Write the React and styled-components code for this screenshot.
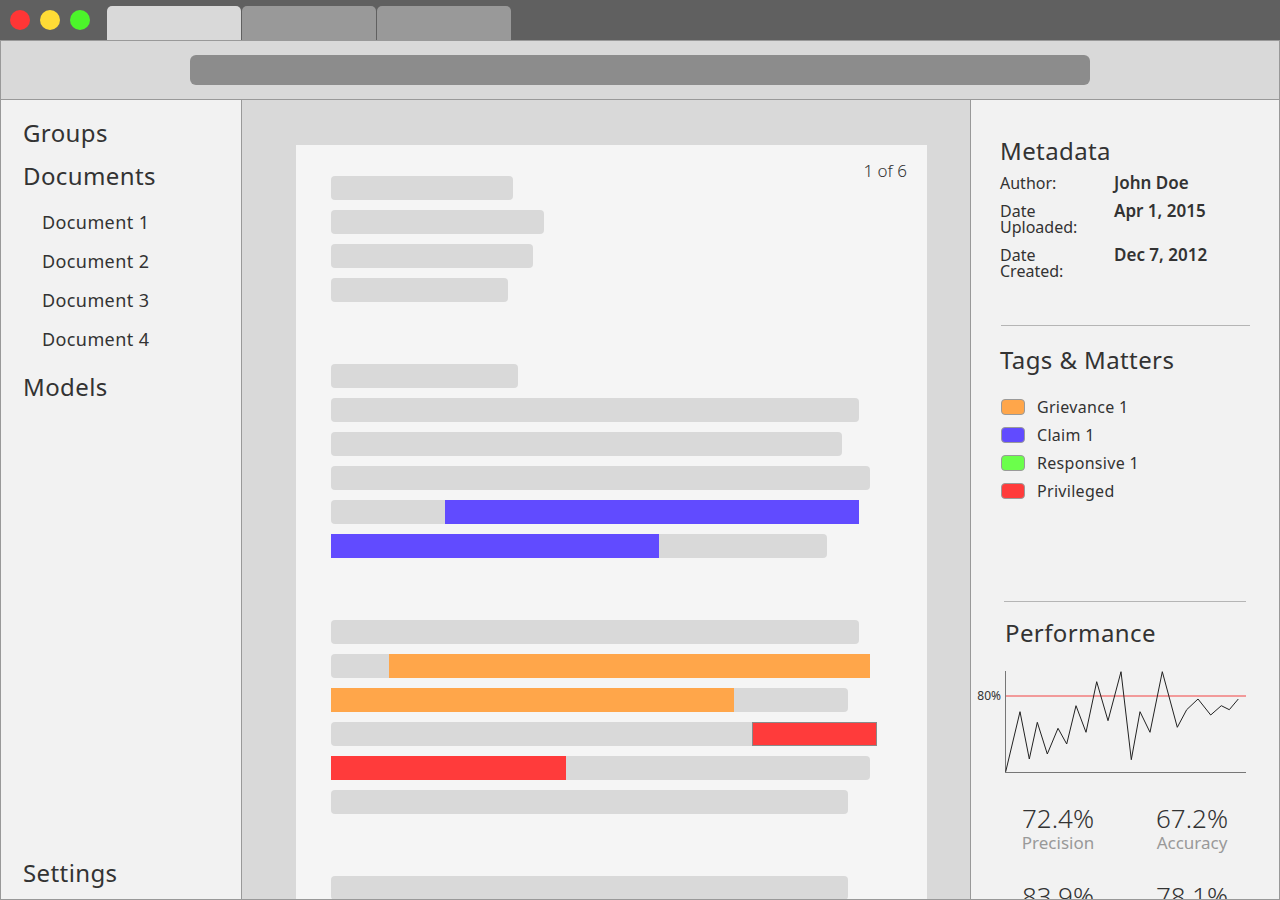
import React from 'react'
import styled, { createGlobalStyle } from 'styled-components'

const GlobalStyle = createGlobalStyle`
  html, body, #root {
    margin: 0;
    padding: 0;
    height: 100%;
  }
  body {
    font-family: 'Noto Sans', 'Open Sans', sans-serif;
    color: #333;
    overflow: hidden;
  }
  * { box-sizing: border-box; }
`

const Window = styled.div`
  width: 1280px;
  height: 900px;
  display: flex;
  flex-direction: column;
  overflow: hidden;
  background: #d9d9d9;
`

const TitleBar = styled.div`
  height: 40px;
  flex: none;
  background: #606060;
  display: flex;
  align-items: flex-end;
  padding-left: 10px;
`

const Lights = styled.div`
  align-self: center;
  display: flex;
  gap: 10px;
`

const Light = styled.span`
  width: 20px;
  height: 20px;
  border-radius: 50%;
  background: ${p => p.color};
`

const Tabs = styled.div`
  display: flex;
  gap: 1px;
  margin-left: 17px;
`

const Tab = styled.div`
  width: 134px;
  height: 34px;
  border-radius: 5px 5px 0 0;
  background: ${p => (p.active ? '#d9d9d9' : '#999999')};
`

const Toolbar = styled.div`
  height: 60px;
  flex: none;
  border: 1px solid #999;
  background: #d9d9d9;
  display: flex;
  align-items: center;
  justify-content: center;
`

const UrlBar = styled.div`
  width: 900px;
  height: 30px;
  border-radius: 6px;
  background: #8c8c8c;
`

const Main = styled.div`
  flex: 1;
  min-height: 0;
  display: flex;
  border-bottom: 1px solid #999;
`

const Sidebar = styled.nav`
  width: 242px;
  flex: none;
  background: #f2f2f2;
  border-left: 1px solid #999;
  border-right: 1px solid #999;
  padding: 11px 0 5px 22px;
  display: flex;
  flex-direction: column;
`

const NavHeading = styled.div`
  font-size: 24px;
  line-height: 43px;
  letter-spacing: 0.4px;
  margin-top: ${p => (p.bottom ? 'auto' : '0')};
`

const SubList = styled.div`
  margin: 6px 0;
  padding-left: 19px;
`

const SubItem = styled.div`
  font-size: 18px;
  line-height: 39px;
  letter-spacing: 0.4px;
`

const Center = styled.main`
  flex: 1;
  min-width: 0;
  background: #d9d9d9;
  padding: 45px 43px 0 54px;
  overflow: hidden;
`

const Page = styled.div`
  position: relative;
  background: #f5f5f5;
  min-height: 100%;
  padding: 31px 35px;
  display: flex;
  flex-direction: column;
  gap: 62px;
`

const PageCount = styled.span`
  position: absolute;
  top: 14px;
  right: 20px;
  font-size: 17px;
  font-weight: 300;
`

const Group = styled.div`
  display: flex;
  flex-direction: column;
  gap: 10px;
`

const Row = styled.div`
  display: flex;
  height: 24px;
`

const Segment = styled.div`
  flex: none;
  height: 100%;
  background: ${p => p.color};
  border-radius: ${p => p.radius};
  border: ${p => (p.outlined ? '1px solid #8a8a8a' : 'none')};
`

const RightPanel = styled.aside`
  width: 310px;
  flex: none;
  background: #f2f2f2;
  border-left: 1px solid #999;
  border-right: 1px solid #999;
  padding: 36px 0 0 29px;
  overflow: hidden;
  display: flex;
  flex-direction: column;

  & > * {
    flex-shrink: 0;
  }
`

const PanelHeading = styled.h2`
  margin: ${p => p.margin || '0'};
  font-size: 24px;
  line-height: 30px;
  font-weight: 400;
  letter-spacing: 0.4px;
`

const MetaGrid = styled.div`
  margin-top: 9px;
  display: grid;
  grid-template-columns: 114px 1fr;
  row-gap: 12px;
`

const MetaLabel = styled.div`
  font-size: 16px;
  line-height: 16px;
  width: 90px;
`

const MetaValue = styled.div`
  font-size: 17px;
  line-height: 16px;
  font-weight: 600;
`

const Divider = styled.div`
  height: 1px;
  width: ${p => p.width}px;
  background: #b5b5b5;
  margin: ${p => p.margin};
`

const TagList = styled.div`
  margin-top: 18px;
  display: flex;
  flex-direction: column;
`

const Tag = styled.div`
  display: flex;
  align-items: center;
  height: 28px;
  font-size: 16px;
  letter-spacing: 0.3px;
  padding-left: 1px;
`

const Swatch = styled.span`
  width: 24px;
  height: 16px;
  border-radius: 4px;
  border: 1px solid #9a9a9a;
  background: ${p => p.color};
  margin-right: 12px;
`

const Chart = styled.svg`
  display: block;
  margin: 16px 0 0 -29px;
  overflow: visible;
`

const Stats = styled.div`
  margin: 24px 0 0 -9px;
  display: grid;
  grid-template-columns: 134px 134px;
  row-gap: 28px;
`

const Stat = styled.div`
  display: flex;
  flex-direction: column;
  align-items: center;
`

const StatValue = styled.div`
  font-size: 26px;
  line-height: 30px;
  font-weight: 300;
`

const StatLabel = styled.div`
  font-size: 17px;
  line-height: 20px;
  color: #999;
`

const GRAY = '#d9d9d9'
const BLUE = '#614bff'
const ORANGE = '#ffa64a'
const RED = '#ff3b3b'
const GREEN = '#6bff4b'

const docGroups = [
  [[[182]], [[213]], [[202]], [[177]]],
  [
    [[187]], [[528]], [[511]], [[539]],
    [[114], [414, BLUE]],
    [[328, BLUE], [168]],
  ],
  [
    [[528]],
    [[58], [481, ORANGE]],
    [[403, ORANGE], [114]],
    [[421], [125, RED, true]],
    [[235, RED], [304]],
    [[517]],
  ],
  [[[517]]],
]

const tags = [
  ['Grievance 1', ORANGE],
  ['Claim 1', BLUE],
  ['Responsive 1', GREEN],
  ['Privileged', RED],
]

const chartPoints = [
  [34.7, 107.7], [49, 47.7], [58.3, 95], [66.3, 58.3], [76.3, 90], [87, 64.3],
  [95.7, 80], [105, 41.7], [115, 68.3], [125.7, 17.7], [137, 56.7], [150, 7.7],
  [160.3, 95.7], [169, 47.7], [179, 68.3], [191.3, 7.7], [206.3, 63.3],
  [215.7, 45.7], [227, 35], [239.7, 51], [250.3, 41.7], [258.3, 45.7], [267.3, 35],
]

const stats = [
  ['72.4%', 'Precision'],
  ['67.2%', 'Accuracy'],
  ['83.9%', 'Recall'],
  ['78.1%', 'F1 Score'],
]

function radiusFor(i, count, color) {
  if (color) return '0'
  const left = i === 0 ? '4px' : '0'
  const right = i === count - 1 ? '4px' : '0'
  return `${left} ${right} ${right} ${left}`
}

function DocRow({ segments }) {
  return (
    <Row>
      {segments.map(([w, color, outlined], i) => (
        <Segment
          key={i}
          style={{ width: w }}
          color={color || GRAY}
          outlined={outlined}
          radius={radiusFor(i, segments.length, color)}
        />
      ))}
    </Row>
  )
}

export default function App() {
  return (
    <>
      <GlobalStyle />
      <Window>
        <TitleBar>
          <Lights>
            <Light color="#ff3636" />
            <Light color="#ffdc36" />
            <Light color="#4cf52a" />
          </Lights>
          <Tabs>
            <Tab active />
            <Tab />
            <Tab />
          </Tabs>
        </TitleBar>
        <Toolbar>
          <UrlBar />
        </Toolbar>
        <Main>
          <Sidebar>
            <NavHeading>Groups</NavHeading>
            <NavHeading>Documents</NavHeading>
            <SubList>
              <SubItem>Document 1</SubItem>
              <SubItem>Document 2</SubItem>
              <SubItem>Document 3</SubItem>
              <SubItem>Document 4</SubItem>
            </SubList>
            <NavHeading>Models</NavHeading>
            <NavHeading bottom>Settings</NavHeading>
          </Sidebar>

          <Center>
            <Page>
              <PageCount>1 of 6</PageCount>
              {docGroups.map((rows, g) => (
                <Group key={g}>
                  {rows.map((segs, r) => (
                    <DocRow key={r} segments={segs} />
                  ))}
                </Group>
              ))}
            </Page>
          </Center>

          <RightPanel>
            <PanelHeading>Metadata</PanelHeading>
            <MetaGrid>
              <MetaLabel>Author:</MetaLabel>
              <MetaValue>John Doe</MetaValue>
              <MetaLabel>Date Uploaded:</MetaLabel>
              <MetaValue>Apr 1, 2015</MetaValue>
              <MetaLabel>Date Created:</MetaLabel>
              <MetaValue>Dec 7, 2012</MetaValue>
            </MetaGrid>

            <Divider width={249} margin="46px 0 0 1px" />
            <PanelHeading margin="19px 0 0">Tags &amp; Matters</PanelHeading>
            <TagList>
              {tags.map(([name, color]) => (
                <Tag key={name}>
                  <Swatch color={color} />
                  {name}
                </Tag>
              ))}
            </TagList>

            <Divider width={242} margin="96px 0 0 4px" />
            <PanelHeading margin="16px 0 0 5px">Performance</PanelHeading>
            <Chart width="280" height="115" viewBox="0 0 280 115">
              <line x1="34" y1="32" x2="275" y2="32" stroke="#f29a9a" strokeWidth="2" />
              <text x="30" y="36" textAnchor="end" fontSize="12" fill="#333"
                fontFamily="'Noto Sans', sans-serif">80%</text>
              <line x1="34.5" y1="7" x2="34.5" y2="108" stroke="#777" strokeWidth="1" />
              <line x1="34" y1="108.5" x2="275" y2="108.5" stroke="#777" strokeWidth="1" />
              <polyline
                points={chartPoints.map(p => p.join(',')).join(' ')}
                fill="none"
                stroke="#222"
                strokeWidth="1"
              />
            </Chart>
            <Stats>
              {stats.map(([v, l]) => (
                <Stat key={l}>
                  <StatValue>{v}</StatValue>
                  <StatLabel>{l}</StatLabel>
                </Stat>
              ))}
            </Stats>
          </RightPanel>
        </Main>
      </Window>
    </>
  )
}
